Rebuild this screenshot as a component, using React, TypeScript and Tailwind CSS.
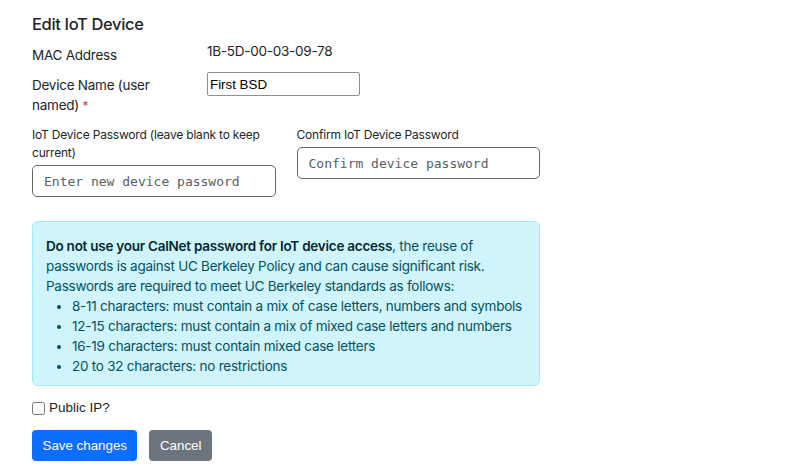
import React from "react";

export default function App() {
  const inter = { fontFamily: "Inter, 'Noto Sans', sans-serif" };
  return (
    <div
      className="w-[800px] h-[472px] bg-white text-[#212529] px-[32px] pt-[12px]"
      style={inter}
    >
      <div className="w-[508px]">
        <h1 className="text-[16.5px] leading-[24px] font-medium tracking-[-0.35px] m-0">
          Edit IoT Device
        </h1>

        <div className="grid grid-cols-[175px_1fr] items-start mt-[5px] text-[13.5px] leading-[20px] tracking-[-0.25px]">
          <div className="pt-[4px]">MAC Address</div>
          <div>1B-5D-00-03-09-78</div>
        </div>

        <div className="grid grid-cols-[175px_1fr] items-start mt-[7px]">
          <label className="pt-[4px] pr-[15px] text-[13.5px] leading-[19.5px] tracking-[-0.25px]">
            Device Name (user named) <span className="text-[#dc3545] text-[12px]">*</span>
          </label>
          <div>
            <input
              defaultValue="First BSD"
              className="block w-[153px] h-[24px] border border-[#8f8f8f] rounded-[2px] px-[2px] text-[13.33px] text-black outline-none"
              style={{ fontFamily: "'Liberation Sans', Arial, sans-serif" }}
            />
          </div>
        </div>

        <div className="grid grid-cols-2 gap-x-[21px] items-start mt-[11px]">
          <div>
            <label className="block text-[12px] leading-[18px] tracking-[-0.2px] mb-[3px]">
              IoT Device Password (leave blank to keep current)
            </label>
            <input
              type="text"
              placeholder="Enter new device password"
              className="block w-full h-[32px] border border-[#5f666d] rounded-[5px] pl-[11px] text-[13px] placeholder:text-[#575e65] outline-none"
              style={{ fontFamily: "'DejaVu Sans Mono', monospace" }}
            />
          </div>
          <div>
            <label className="block text-[12px] leading-[18px] tracking-[-0.2px] mb-[3px]">
              Confirm IoT Device Password
            </label>
            <input
              type="text"
              placeholder="Confirm device password"
              className="block w-full h-[32px] border border-[#5f666d] rounded-[5px] pl-[11px] text-[13px] placeholder:text-[#575e65] outline-none"
              style={{ fontFamily: "'DejaVu Sans Mono', monospace" }}
            />
          </div>
        </div>

        <div className="mt-[24px] border border-[#9eeaf9] bg-[#cff4fc] rounded-[6px] pl-[13px] pr-[10px] pt-[14px] pb-[9px] text-[13.5px] leading-[20px] tracking-[-0.25px] text-[#055160]">
          <p className="m-0">
            <strong className="font-semibold text-[#032830]">
              Do not use your CalNet password for IoT device access
            </strong>
            , the reuse of passwords is against UC Berkeley Policy and can cause significant risk.
            Passwords are required to meet UC Berkeley standards as follows:
          </p>
          <ul className="list-disc pl-[26px] m-0">
            <li>8-11 characters: must contain a mix of case letters, numbers and symbols</li>
            <li>12-15 characters: must contain a mix of mixed case letters and numbers</li>
            <li>16-19 characters: must contain mixed case letters</li>
            <li>20 to 32 characters: no restrictions</li>
          </ul>
        </div>

        <div
          className="flex items-center mt-[12px] h-[20px]"
          style={{ fontFamily: "'Liberation Sans', Arial, sans-serif" }}
        >
          <input type="checkbox" className="m-0 w-[13px] h-[13px]" />
          <label className="ml-[4px] text-[13.5px]">Public IP?</label>
        </div>

        <div
          className="flex items-center gap-[12px] mt-[12px]"
          style={{ fontFamily: "'Liberation Sans', Arial, sans-serif" }}
        >
          <button className="h-[31px] px-[10.5px] rounded-[4px] bg-[#0d6efd] text-white text-[13.33px]">
            Save changes
          </button>
          <button className="h-[31px] px-[10.5px] rounded-[4px] bg-[#6c757d] text-white text-[13.33px]">
            Cancel
          </button>
        </div>
      </div>
    </div>
  );
}
